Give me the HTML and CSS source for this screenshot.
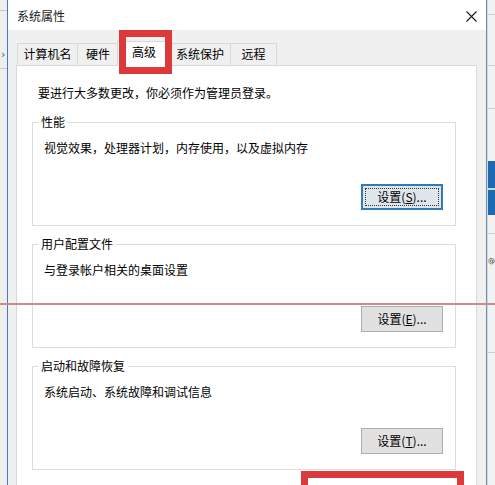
FILE: index.html
```html
<!DOCTYPE html>
<html lang="zh-CN">
<head>
<meta charset="utf-8">
<title>系统属性</title>
<link rel="stylesheet" href="styles.css">
</head>
<body>
<div class="screen">
  <div class="bg-left">
    <div class="bl-line bl-l1"></div>
    <div class="bl-arrow">›</div>
    <div class="bl-line bl-l2"></div>
  </div>
  <div class="window">
    <div class="titlebar">
      <span class="title">系统属性</span>
      <svg class="close" width="11" height="11" viewBox="0 0 11 11"><path d="M0.5 0.5 L10.5 10.5 M10.5 0.5 L0.5 10.5" stroke="#1a1a1a" stroke-width="1.1" fill="none"/></svg>
    </div>
    <div class="body">
      <div class="tabs">
        <div class="tab t1">计算机名</div>
        <div class="tab t2">硬件</div>
        <div class="tab t3 active">高级</div>
        <div class="tab t4">系统保护</div>
        <div class="tab t5">远程</div>
      </div>
      <div class="panel">
        <p class="note">要进行大多数更改，你必须作为管理员登录。</p>
        <fieldset class="group">
          <legend>性能</legend>
          <p class="desc">视觉效果，处理器计划，内存使用，以及虚拟内存</p>
          <div class="actions"><button class="btn focused"><span class="focusrect">设置(<u>S</u>)...</span></button></div>
        </fieldset>
        <fieldset class="group">
          <legend>用户配置文件</legend>
          <p class="desc">与登录帐户相关的桌面设置</p>
          <div class="actions"><button class="btn">设置(<u>E</u>)...</button></div>
        </fieldset>
        <fieldset class="group">
          <legend>启动和故障恢复</legend>
          <p class="desc">系统启动、系统故障和调试信息</p>
          <div class="actions"><button class="btn">设置(<u>T</u>)...</button></div>
        </fieldset>
      </div>
    </div>
  </div>
  <div class="bg-right">
    <div class="br-line br-l1"></div>
    <div class="br-line br-l2"></div>
    <div class="br-line br-l3"></div>
    <div class="br-block"><div class="br-white"></div></div>
    <div class="br-line br-l4"></div>
    <div class="br-at">@</div>
    <div class="br-line br-l5"></div>
  </div>
  <div class="mark mark-tab"></div>
  <div class="mark mark-line"></div>
  <div class="mark mark-bottom"></div>
</div>
</body>
</html>
```

FILE: styles.css
```css
html, body {
  margin: 0;
  padding: 0;
  background: #f0f0f0;
}
body {
  font-family: "Noto Sans CJK SC", "Microsoft YaHei", sans-serif;
  font-size: 12px;
  color: #000;
}
.screen {
  position: relative;
  display: flex;
  width: 495px;
  height: 485px;
  overflow: hidden;
}
.bg-left {
  width: 7px;
  flex: none;
  background: #eeeeee;
  display: flex;
  flex-direction: column;
  overflow: hidden;
}
.bl-line { height: 1px; background: #c8c8c8; flex: none; }
.bl-l1 { margin-top: 10px; }
.bl-arrow {
  margin-top: 38px;
  height: 12px;
  line-height: 12px;
  font-size: 11px;
  color: #555;
  padding-left: 1px;
  font-family: "DejaVu Sans", sans-serif;
  flex: none;
}
.bl-l2 { margin-top: 7px; }

.window {
  width: 478px;
  flex: none;
  border-left: 1px solid #3f7cc4;
  border-right: 1px solid #6a8fb8;
  background: #f0f0f0;
  display: flex;
  flex-direction: column;
  overflow: hidden;
}
.titlebar {
  flex: none;
  height: 30px;
  background: #ffffff;
  display: flex;
  align-items: center;
  justify-content: space-between;
  padding: 2px 9px 0 9px;
  box-sizing: border-box;
}
.title { line-height: 16px; color: #1a1a1a; }
.close { display: block; margin-top: 1px; }

.body {
  flex: none;
  padding: 12px 8px 0 8px;
}
.tabs {
  display: flex;
  align-items: flex-end;
  height: 23px;
  padding-left: 1px;
}
.tab {
  height: 22px;
  line-height: 19px;
  box-sizing: border-box;
  border: 1px solid #d9d9d9;
  border-bottom: none;
  margin-left: -1px;
  text-align: center;
  background: #f0f0f0;
  color: #000;
}
.t1 { width: 61px; margin-left: 0; }
.t2 { width: 42px; }
.t3 { width: 54px; }
.t4 { width: 62px; }
.t5 { width: 47px; }
.tab.active {
  height: 25px;
  line-height: 20px;
  background: #ffffff;
  margin-left: -2px;
  margin-right: -1px;
  margin-bottom: -1px;
  position: relative;
  z-index: 1;
}
.panel {
  width: 461px;
  box-sizing: border-box;
  border: 1px solid #d9d9d9;
  background: #ffffff;
  height: 440px;
  padding: 19px 0 0 0;
}
.note {
  margin: 0 0 13px 21px;
  line-height: 16px;
}
.group {
  margin: 0 0 10px 15px;
  width: 424px;
  box-sizing: border-box;
  border: 1px solid #dcdcdc;
  padding: 0 0 15px 0;
  min-width: 0;
}
.group legend {
  margin-left: 5px;
  padding: 0 3px;
  line-height: 16px;
  height: 16px;
}
.desc {
  margin: 10px 0 0 11px;
  line-height: 16px;
}
.actions {
  display: flex;
  justify-content: flex-end;
  padding-right: 12px;
  margin-top: 28px;
}
.btn {
  width: 82px;
  height: 26px;
  box-sizing: border-box;
  border: 1px solid #adadad;
  background: #e1e1e1;
  font-family: inherit;
  font-size: 12px;
  color: #000;
  padding: 0;
  display: flex;
  align-items: center;
  justify-content: center;
  line-height: 16px;
}
.btn u { text-decoration: underline; text-underline-offset: 1px; }
.btn.focused {
  border: 2px solid #2f7cb8;
  background: #dfe6ec;
}
.focusrect {
  display: flex;
  align-items: center;
  justify-content: center;
  width: 74px;
  height: 18px;
  box-sizing: border-box;
  border: 1px dotted #333;
}

.bg-right {
  width: 8px;
  flex: none;
  background: #f2f2f2;
  display: flex;
  flex-direction: column;
  overflow: hidden;
  border-left: 1px solid #d6d6d6;
  box-sizing: border-box;
}
.br-line { height: 1px; background: #cfcfcf; flex: none; }
.br-l1 { margin-top: 14px; }
.br-l2 { margin-top: 50px; }
.br-l3 { margin-top: 42px; }
.br-block {
  margin-top: 52px;
  height: 54px;
  background: #1d69b2;
  flex: none;
  display: flex;
  flex-direction: column;
}
.br-white { margin-top: 27px; height: 2px; background: #c9dced; }
.br-l4 { margin-top: 18px; }
.br-at {
  margin-top: 22px;
  height: 10px;
  line-height: 10px;
  font-size: 7px;
  color: #333;
  font-family: "DejaVu Sans", sans-serif;
  flex: none;
}
.br-l5 { margin-top: 86px; }

.mark { position: absolute; box-sizing: border-box; }
.mark-tab {
  left: 119px;
  top: 30px;
  width: 53px;
  height: 44px;
  border: 7px solid #dc3a3a;
  z-index: 5;
}
.mark-line {
  left: 0;
  top: 303px;
  width: 495px;
  height: 2px;
  background: #c98b8b;
  z-index: 5;
}
.mark-bottom {
  left: 301px;
  top: 471px;
  width: 163px;
  height: 40px;
  border: 7px solid #dc3a3a;
  z-index: 5;
}
```
